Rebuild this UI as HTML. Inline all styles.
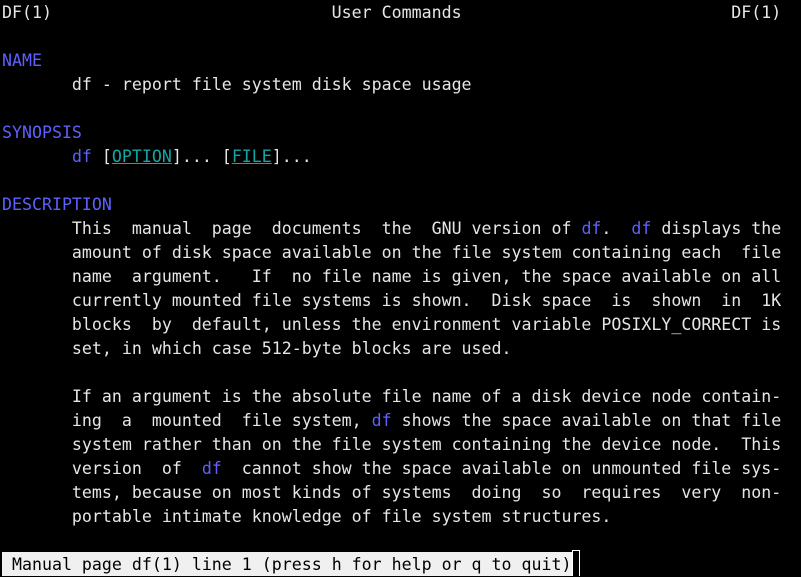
<!DOCTYPE html>
<html><head><meta charset="utf-8"><style>
html,body{margin:0;padding:0;background:#000;width:801px;height:576px;overflow:hidden}
pre{margin:0;position:absolute;left:2px;top:1px;font-family:"DejaVu Sans Mono","Liberation Mono",monospace;font-size:16.6px;line-height:24px;color:#e6e6e6;white-space:pre}
.b{color:#5f5fff}
.c{color:#12a7a7;text-decoration:underline}
#st{position:absolute;left:2px;top:552px;height:24px;width:570px;background:#f0f0f0;color:#000;font-family:"DejaVu Sans Mono","Liberation Mono",monospace;font-size:16.6px;line-height:24px;white-space:pre;padding-left:10px;padding-top:1px;box-sizing:border-box}
#cur{position:absolute;left:572px;top:550px;width:8px;height:26px;border:1px solid #fff;border-bottom:none;box-sizing:border-box}
</style></head><body>
<pre>DF(1)                            User Commands                           DF(1)

<span class="b">NAME</span>
       df - report file system disk space usage

<span class="b">SYNOPSIS</span>
       <span class="b">df</span> [<span class="c">OPTION</span>]... [<span class="c">FILE</span>]...

<span class="b">DESCRIPTION</span>
       This  manual  page  documents  the  GNU version of <span class="b">df</span>.  <span class="b">df</span> displays the
       amount of disk space available on the file system containing each  file
       name  argument.   If  no file name is given, the space available on all
       currently mounted file systems is shown.  Disk space  is  shown  in  1K
       blocks  by  default, unless the environment variable POSIXLY_CORRECT is
       set, in which case 512-byte blocks are used.

       If an argument is the absolute file name of a disk device node contain‐
       ing  a  mounted  file system, <span class="b">df</span> shows the space available on that file
       system rather than on the file system containing the device node.  This
       version  of  <span class="b">df</span>  cannot show the space available on unmounted file sys‐
       tems, because on most kinds of systems  doing  so  requires  very  non‐
       portable intimate knowledge of file system structures.
</pre>
<div id="st">Manual page df(1) line 1 (press h for help or q to quit)</div>
<div id="cur"></div>
</body></html>
